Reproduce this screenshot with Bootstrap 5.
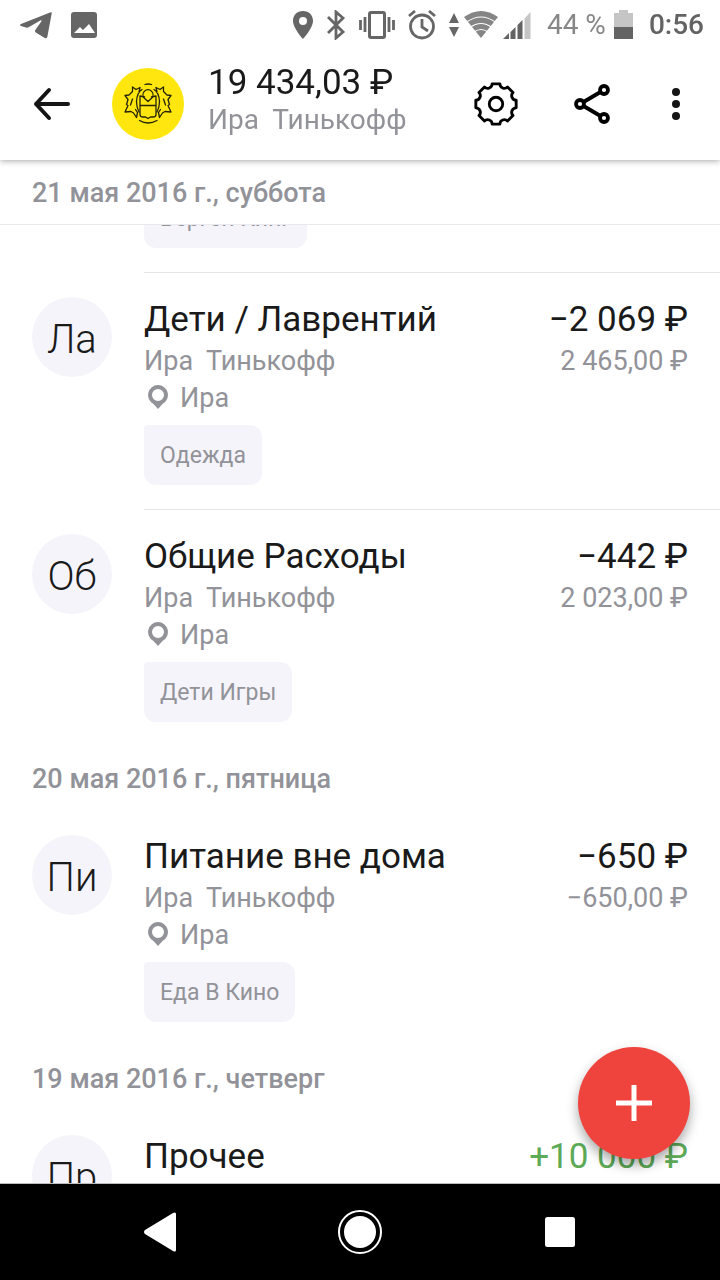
<!DOCTYPE html>
<html lang="ru">
<head>
<meta charset="utf-8">
<meta name="viewport" content="width=device-width, initial-scale=1">
<title>Операции</title>
<link href="https://cdn.jsdelivr.net/npm/bootstrap@5.3.0/dist/css/bootstrap.min.css" rel="stylesheet">
<style>
  body { font-family: Roboto, "Noto Sans", sans-serif; font-size: 28px; line-height: 36px; color: #1a1a1a; background: #fff; }
  .tone { color: #929299; }
  .status { height: 48px; color: #636363; padding: 2px 16px 0 20px; z-index: 4; }
  .status .pct { color: #878787; }
  .status .clock { font-weight: 500; }
  .signals { gap: 13px; }
  .appbar { height: 112px; padding: 0 32px; z-index: 3; box-shadow: 0 1px 6px rgba(0,0,0,.35); }
  .appbar .btn, .sysnav .btn, .fab { border: 0; padding: 0; line-height: 0; }
  .account { margin-left: 24px; padding-bottom: 6px; }
  .emblem { margin-left: 40px; }
  .sum { font-size: 35px; line-height: 38px; }
  .feed { overflow-y: auto; scrollbar-width: none; }
  .feed::-webkit-scrollbar { display: none; }
  .day { height: 64px; padding: 0 32px; margin: 0; font-size: 27px; line-height: 66px; font-weight: 500; background: #fff; }
  .day-pinned { position: sticky; top: 0; z-index: 1; height: 65px; border-bottom: 1px solid #e9e9ed; }
  .entry { padding-left: 32px; gap: 32px; }
  .face { width: 80px; height: 80px; margin-top: 25px; border-radius: 50%; background: #f5f4fa; font-size: 40px; font-weight: 300; padding-top: 6px; }
  .entry-short { padding-left: 144px; }
  .entry-body { padding: 25px 32px 24px 0; font-size: 27px; }
  .entry + .entry .entry-body { border-top: 1px solid #e4e4e9; }
  .name { font-size: 35px; line-height: 44px; font-weight: 400; margin: 0; }
  .sub { line-height: 38px; }
  .who { white-space: pre; }
  .place { gap: 12px; padding-left: 4px; }
  .chip { height: 60px; margin-top: 9px; padding: 0 16px; border-radius: 4px 12px 12px 12px; background: #f5f4fa; font-size: 23px; line-height: 62px; }
  .plus { color: #5daa57; }
  .fab { right: 30px; bottom: 24px; width: 112px; height: 112px; border-radius: 50%; z-index: 2; background: #ef433e; box-shadow: 0 6px 12px rgba(0,0,0,.35); }
  .fab:hover { background: #e03a35; }
  .sysnav { height: 97px; background: #000; border-top: 1px solid #bbb; gap: 152px; }
</style>
</head>
<body>
<svg width="0" height="0" class="d-none" aria-hidden="true">
  <symbol id="pin" viewBox="0 0 20 26"><path fill="#929299" fill-rule="evenodd" d="M10 0a10 10 0 0 1 4.500 18.900L10 24l-4.500-5.100A10 10 0 0 1 10 0zm0 4a6 6 0 1 0 0 12 6 6 0 0 0 0-12z"/></symbol>
</svg>
<div class="d-flex flex-column vh-100 overflow-hidden">

  <div class="status d-flex align-items-center flex-shrink-0 bg-white position-relative">
    <svg width="32" height="30" viewBox="0 0 32 30" fill="#666"><path d="M30 2.500q2-1 1.700 1L27.300 27q-.5 2-2.500 1l-9-5.500q-1.500-1-.5-2.500l6-8.500q1-2-1-1L9 17q-1.500 1-3 .5l-5-1.500q-2-1 0-2z"/></svg>
    <svg class="ms-3" width="32" height="30" viewBox="0 0 32 30"><rect x="3" y="2" width="26" height="26" rx="3" fill="#666"/><path fill="#fff" d="M6 23l6-6 3 3 6-6 6 9z"/></svg>
    <div class="d-flex align-items-center ms-auto">
      <div class="signals d-flex align-items-center">
        <svg width="20" height="30" viewBox="0 0 20 30"><path fill="#666" fill-rule="evenodd" d="M10 1c6 0 10 4 10 10 0 7-10 18-10 18S0 18 0 11C0 5 4 1 10 1zm0 6a4 4 0 1 0 0 8 4 4 0 0 0 0-8z"/></svg>
        <svg width="20" height="30" viewBox="0 0 20 30" fill="none" stroke="#666" stroke-width="2.800"><path d="M2 7l15 15-7 6V2l7 6L2 23"/></svg>
        <svg width="36" height="30" viewBox="0 0 36 30" fill="none" stroke="#666" stroke-width="3"><rect x="10.500" y="2.500" width="15" height="25" rx="1.500"/><path stroke-width="2.800" d="M1.500 10v10M6 7v15M30 7v15M34.500 10v10"/></svg>
        <svg width="28" height="30" viewBox="0 0 28 30" fill="none" stroke="#666" stroke-width="2.800"><circle cx="14" cy="16.500" r="11.500"/><path d="M1 6l6-5M27 6l-6-5M14 9v8l6 4"/></svg>
        <svg width="10" height="30" viewBox="0 0 10 30" fill="#666"><path d="M5 3l5 10H0zM5 27L0 17h10z"/></svg>
      </div>
      <svg class="ms-1" width="36" height="30" viewBox="0 0 36 30"><path fill="#858585" d="M1 7Q18-5 35 7L18 28z"/><path fill="none" stroke="#fff" stroke-width="1.200" d="M3 12.500q15-11 30 0M7 17.500q11-8 22 0M11 22q7-5 14 0"/></svg>
      <svg class="ms-1" width="28" height="30" viewBox="0 0 28 30"><path fill="#636363" d="M0 29l6-6v6zM7.500 22l5-5v12h-5zM14.500 15l5-5v19h-5z"/><path fill="#c5c5c5" d="M21.500 8.500L27.500 2v27h-6z"/></svg>
      <span class="pct ms-3">44 %</span>
      <svg class="ms-2" width="19" height="30" viewBox="0 0 19 30"><path fill="#c5c5c5" d="M0 3h5V0h9v3h5v14H0z"/><path fill="#636363" d="M0 17h19v12H0z"/></svg>
      <span class="clock ms-3">0:56</span>
    </div>
  </div>

  <header class="appbar d-flex align-items-center flex-shrink-0 bg-white position-relative">
    <button class="btn" type="button" aria-label="Назад"><svg width="40" height="40" viewBox="0 0 40 40" fill="none" stroke="#151515" stroke-width="4" stroke-linecap="round" stroke-linejoin="round"><path d="M36 20H4M17 6L4 20l13 14"/></svg></button>
    <svg class="emblem flex-shrink-0" width="72" height="72" viewBox="0 0 72 72" aria-hidden="true">
      <circle cx="36" cy="36" r="36" fill="#ffe60f"/>
      <g fill="none" stroke="#25240d" stroke-width="1.300" stroke-linejoin="round" stroke-linecap="round">
        <path d="M33 16.500q3-1 6.500 0M27.500 52.500q8.500 5 17.500 0M32.500 29L28 28v18.500q0 2.500 3 2.500h2.500l2.500 1.500 2.500-1.500H41q3 0 3-2.500V28l-4.500 1M28 37.500h16"/>
        <path d="M36 33.500l-3.800-3.500a5 5 0 1 1 7.600 0z"/>
        <g id="beast"><path d="M30 21.500q-5 3-5.500 12 0 6 2.500 10.500M27 24l1-4.500-4 2-3.500-2.500v4.500L17 27l-4 .5 3 4-1.500 5 1.500 1-3 6.500 6-.5 2.500 1.500 3 4.500 1-5-2-3M20.500 31l-2 6"/></g>
        <use href="#beast" transform="matrix(-1 0 0 1 72 0)"/>
      </g>
    </svg>
    <div class="account text-nowrap">
      <div class="sum">19 434,03 ₽</div>
      <div class="tone who">Ира  Тинькофф</div>
    </div>
    <div class="d-flex align-items-center gap-5 ms-auto">
      <button class="btn" type="button" aria-label="Настройки"><svg width="48" height="48" viewBox="-25 -25 50 50" fill="none" stroke="#000" stroke-width="3" stroke-linejoin="round"><path d="M4-21A4.700 4.700 0 0 0 12-17.700L17.700-12A4.700 4.700 0 0 0 21-4V4A4.700 4.700 0 0 0 17.700 12L12 17.700A4.700 4.700 0 0 0 4 21H-4A4.700 4.700 0 0 0-12 17.700L-17.700 12A4.700 4.700 0 0 0-21 4V-4A4.700 4.700 0 0 0-17.700-12L-12-17.700A4.700 4.700 0 0 0-4-21Z"/><circle r="7"/></svg></button>
      <button class="btn" type="button" aria-label="Поделиться"><svg width="48" height="48" viewBox="0 0 48 48" fill="none" stroke="#000" stroke-width="3.800"><circle cx="12" cy="24" r="4"/><circle cx="36" cy="10" r="4"/><circle cx="36" cy="38" r="4"/><path d="M15.500 22l17-10M15.500 26l17 10"/></svg></button>
      <button class="btn" type="button" aria-label="Ещё"><svg width="24" height="48" viewBox="0 0 24 48" fill="#151515"><circle cx="12" cy="12" r="4"/><circle cx="12" cy="24" r="4"/><circle cx="12" cy="36" r="4"/></svg></button>
    </div>
  </header>

  <div class="position-relative flex-grow-1 d-flex flex-column overflow-hidden">
    <main class="feed flex-grow-1" id="feed">
      <h2 class="day day-pinned tone">21 мая 2016 г., суббота</h2>

      <article class="entry entry-short">
        <div class="entry-body">
          <div class="d-flex"><span class="chip tone">Берген Кинг</span></div>
        </div>
      </article>

      <article class="entry d-flex">
        <div class="face d-flex align-items-center justify-content-center flex-shrink-0">Ла</div>
        <div class="entry-body flex-grow-1">
          <div class="d-flex justify-content-between"><h3 class="name">Дети / Лаврентий</h3><div class="name">−2 069 ₽</div></div>
          <div class="sub tone d-flex justify-content-between"><span class="who">Ира  Тинькофф</span><span>2 465,00 ₽</span></div>
          <div class="place tone d-flex align-items-center"><svg width="20" height="26"><use href="#pin"/></svg>Ира</div>
          <div class="d-flex"><span class="chip tone">Одежда</span></div>
        </div>
      </article>

      <article class="entry d-flex">
        <div class="face d-flex align-items-center justify-content-center flex-shrink-0">Об</div>
        <div class="entry-body flex-grow-1">
          <div class="d-flex justify-content-between"><h3 class="name">Общие Расходы</h3><div class="name">−442 ₽</div></div>
          <div class="sub tone d-flex justify-content-between"><span class="who">Ира  Тинькофф</span><span>2 023,00 ₽</span></div>
          <div class="place tone d-flex align-items-center"><svg width="20" height="26"><use href="#pin"/></svg>Ира</div>
          <div class="d-flex"><span class="chip tone">Дети Игры</span></div>
        </div>
      </article>

      <h2 class="day tone">20 мая 2016 г., пятница</h2>
      <article class="entry d-flex">
        <div class="face d-flex align-items-center justify-content-center flex-shrink-0">Пи</div>
        <div class="entry-body flex-grow-1">
          <div class="d-flex justify-content-between"><h3 class="name">Питание вне дома</h3><div class="name">−650 ₽</div></div>
          <div class="sub tone d-flex justify-content-between"><span class="who">Ира  Тинькофф</span><span>−650,00 ₽</span></div>
          <div class="place tone d-flex align-items-center"><svg width="20" height="26"><use href="#pin"/></svg>Ира</div>
          <div class="d-flex"><span class="chip tone">Еда В Кино</span></div>
        </div>
      </article>

      <h2 class="day tone">19 мая 2016 г., четверг</h2>
      <article class="entry d-flex">
        <div class="face d-flex align-items-center justify-content-center flex-shrink-0">Пр</div>
        <div class="entry-body flex-grow-1">
          <div class="d-flex justify-content-between"><h3 class="name">Прочее</h3><div class="name plus">+10 000 ₽</div></div>
        </div>
      </article>
    </main>
    <button class="btn fab position-absolute" type="button" aria-label="Добавить операцию"><svg width="36" height="36" viewBox="0 0 36 36" stroke="#fff" stroke-width="5"><path d="M18 0v36M0 18h36"/></svg></button>
  </div>

  <nav class="sysnav d-flex align-items-center justify-content-center flex-shrink-0" aria-label="Система">
    <button class="btn" type="button" aria-label="Назад"><svg width="48" height="48" viewBox="0 0 48 48" fill="#fff"><path d="M37 5q3-1.500 3 1v36q0 2.500-3 1L9 26q-2-2 0-4z"/></svg></button>
    <button class="btn" type="button" aria-label="Домой"><svg width="48" height="48" viewBox="0 0 48 48"><circle cx="24" cy="24" r="21" fill="none" stroke="#fff" stroke-width="2"/><circle cx="24" cy="24" r="16" fill="#fff"/></svg></button>
    <button class="btn" type="button" aria-label="Недавние"><svg width="48" height="48" viewBox="0 0 48 48"><rect x="9" y="9" width="30" height="30" rx="2.500" fill="#fff"/></svg></button>
  </nav>
</div>
<script src="https://cdn.jsdelivr.net/npm/bootstrap@5.3.0/dist/js/bootstrap.bundle.min.js"></script>
<script>
  // Open the feed just above the second entry of the newest day.
  const feed = document.getElementById('feed');
  const pinned = feed.querySelector('.day-pinned');
  const second = feed.querySelectorAll('.entry')[1];
  feed.scrollTop = second.offsetTop - pinned.offsetHeight - 47;
</script>
</body>
</html>
